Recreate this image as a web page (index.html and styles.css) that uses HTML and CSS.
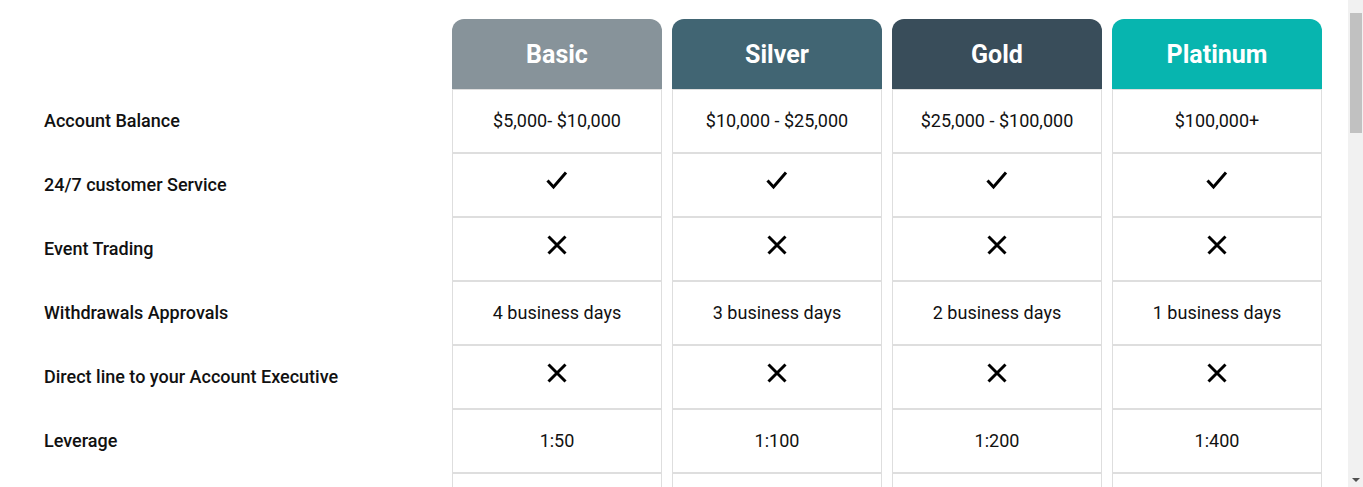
FILE: index.html
```html
<!DOCTYPE html>
<html lang="en">
<head>
<meta charset="utf-8">
<title>Account Types</title>
<link rel="stylesheet" href="styles.css">
</head>
<body>
<main class="page">
  <div class="pricing">
    <div class="corner"></div>
    <div class="head head-basic">Basic</div>
    <div class="head head-silver">Silver</div>
    <div class="head head-gold">Gold</div>
    <div class="head head-platinum">Platinum</div>

    <div class="label">Account Balance</div>
    <div class="cell">$5,000- $10,000</div>
    <div class="cell">$10,000 - $25,000</div>
    <div class="cell">$25,000 - $100,000</div>
    <div class="cell">$100,000+</div>

    <div class="label">24/7 customer Service</div>
    <div class="cell"><svg class="icon" viewBox="0 0 24 24"><polyline points="2.5,11.5 8.5,18 21,3.5"/></svg></div>
    <div class="cell"><svg class="icon" viewBox="0 0 24 24"><polyline points="2.5,11.5 8.5,18 21,3.5"/></svg></div>
    <div class="cell"><svg class="icon" viewBox="0 0 24 24"><polyline points="2.5,11.5 8.5,18 21,3.5"/></svg></div>
    <div class="cell"><svg class="icon" viewBox="0 0 24 24"><polyline points="2.5,11.5 8.5,18 21,3.5"/></svg></div>

    <div class="label">Event Trading</div>
    <div class="cell"><svg class="icon" viewBox="0 0 24 24"><path d="M3.5 3.5L20.5 20.5M20.5 3.5L3.5 20.5"/></svg></div>
    <div class="cell"><svg class="icon" viewBox="0 0 24 24"><path d="M3.5 3.5L20.5 20.5M20.5 3.5L3.5 20.5"/></svg></div>
    <div class="cell"><svg class="icon" viewBox="0 0 24 24"><path d="M3.5 3.5L20.5 20.5M20.5 3.5L3.5 20.5"/></svg></div>
    <div class="cell"><svg class="icon" viewBox="0 0 24 24"><path d="M3.5 3.5L20.5 20.5M20.5 3.5L3.5 20.5"/></svg></div>

    <div class="label">Withdrawals Approvals</div>
    <div class="cell">4 business days</div>
    <div class="cell">3 business days</div>
    <div class="cell">2 business days</div>
    <div class="cell">1 business days</div>

    <div class="label">Direct line to your Account Executive</div>
    <div class="cell"><svg class="icon" viewBox="0 0 24 24"><path d="M3.5 3.5L20.5 20.5M20.5 3.5L3.5 20.5"/></svg></div>
    <div class="cell"><svg class="icon" viewBox="0 0 24 24"><path d="M3.5 3.5L20.5 20.5M20.5 3.5L3.5 20.5"/></svg></div>
    <div class="cell"><svg class="icon" viewBox="0 0 24 24"><path d="M3.5 3.5L20.5 20.5M20.5 3.5L3.5 20.5"/></svg></div>
    <div class="cell"><svg class="icon" viewBox="0 0 24 24"><path d="M3.5 3.5L20.5 20.5M20.5 3.5L3.5 20.5"/></svg></div>

    <div class="label">Leverage</div>
    <div class="cell">1:50</div>
    <div class="cell">1:100</div>
    <div class="cell">1:200</div>
    <div class="cell">1:400</div>

    <div class="label"></div>
    <div class="cell"></div>
    <div class="cell"></div>
    <div class="cell"></div>
    <div class="cell"></div>
  </div>
</main>
<div class="scrollbar" aria-hidden="true">
  <div class="scrollbar-thumb"></div>
  <div class="scrollbar-arrow"></div>
</div>
</body>
</html>
```

FILE: styles.css
```css
* {
  box-sizing: border-box;
}

html, body {
  margin: 0;
  padding: 0;
  background: #ffffff;
}

body {
  font-family: Roboto, "Liberation Sans", Arial, sans-serif;
  color: #111111;
}

.page {
  padding: 19px 0 1300px 44px;
}

.pricing {
  display: grid;
  grid-template-columns: 398px repeat(4, 210px);
  grid-template-rows: 70px;
  grid-auto-rows: 64px;
  column-gap: 10px;
}

.head {
  display: flex;
  align-items: center;
  justify-content: center;
  border-radius: 12px 12px 0 0;
  color: #ffffff;
  font-size: 25px;
  font-weight: 700;
}

.head-basic { background: #87939a; }
.head-silver { background: #416573; }
.head-gold { background: #394d5a; }
.head-platinum { background: #07b5af; }

.label {
  display: flex;
  align-items: center;
  padding-bottom: 2px;
  font-size: 18px;
  font-weight: 500;
  color: #111111;
}

.cell {
  display: flex;
  align-items: center;
  justify-content: center;
  padding-bottom: 2px;
  border: 1px solid #dedede;
  font-size: 18px;
  font-weight: 400;
  color: #111111;
}

.icon {
  width: 24px;
  height: 24px;
  margin-bottom: 6px;
  fill: none;
  stroke: #000000;
  stroke-width: 3;
}

.scrollbar {
  position: fixed;
  top: 0;
  right: 0;
  width: 15px;
  height: 100%;
  background: #f1f1f1;
}

.scrollbar-thumb {
  position: absolute;
  top: 13px;
  left: 2px;
  width: 12px;
  height: 120px;
  background: #c1c1c1;
}

.scrollbar-arrow {
  position: absolute;
  bottom: 5px;
  left: 4px;
  width: 0;
  height: 0;
  border-left: 4px solid transparent;
  border-right: 4px solid transparent;
  border-top: 4px solid #505050;
}
```
